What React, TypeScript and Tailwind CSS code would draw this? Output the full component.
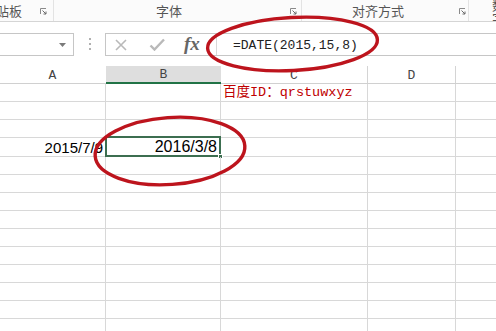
import React from "react";

const cols = [
  { key: "A", w: "w-[106px]" },
  { key: "B", w: "w-[115px]" },
  { key: "C", w: "w-[147px]" },
  { key: "D", w: "w-[88px]" },
  { key: "E", w: "flex-1" },
];

function Launcher() {
  return (
    <svg width="7" height="7" viewBox="0 0 7 7" className="shrink-0">
      <path d="M0.5 6V0.5H6" fill="none" stroke="#8a8a8a" strokeWidth="1" />
      <path d="M2.5 2.5L6 6M6 3.5V6H3.5" fill="none" stroke="#6a6a6a" strokeWidth="1" />
    </svg>
  );
}

function Ribbon() {
  return (
    <div className="flex h-[22px] border-b border-[#d5d5d5] bg-[#fbfbfb] text-[13px] text-[#555] font-['Noto_Sans_CJK_SC',sans-serif] overflow-hidden">
      <div className="flex w-[54px] shrink-0 items-center border-r border-[#e3e3e3]">
        <span className="-ml-[17px] leading-none">剪贴板</span>
        <span className="ml-auto mr-[6px] mt-[2px]">
          <Launcher />
        </span>
      </div>
      <div className="flex w-[248px] shrink-0 items-center border-r border-[#e3e3e3]">
        <span className="ml-[102px] leading-none">字体</span>
        <span className="ml-auto mr-[4px] mt-[2px]">
          <Launcher />
        </span>
      </div>
      <div className="flex w-[167px] shrink-0 items-center border-r border-[#e3e3e3]">
        <span className="ml-[50px] leading-none">对齐方式</span>
        <span className="ml-auto mr-[2px] mt-[2px]">
          <Launcher />
        </span>
      </div>
      <div className="flex flex-1 items-center">
        <span className="ml-[23px] leading-none">数字</span>
      </div>
    </div>
  );
}

function FormulaBar() {
  return (
    <div className="flex h-[44px] items-start pt-[11px] bg-white">
      <div className="flex h-[23px] w-[74px] shrink-0 items-center border border-l-0 border-[#c6c6c6]">
        <svg width="7" height="4" viewBox="0 0 7 4" className="ml-auto mr-[7px]">
          <path d="M0 0H7L3.5 4Z" fill="#7a7a7a" />
        </svg>
      </div>
      <div className="flex w-[31px] shrink-0 flex-col items-center gap-[3px] pt-[5px]">
        <span className="h-[2px] w-[2px] bg-[#b0b0b0]" />
        <span className="h-[2px] w-[2px] bg-[#b0b0b0]" />
        <span className="h-[2px] w-[2px] bg-[#b0b0b0]" />
      </div>
      <div className="flex h-[23px] flex-1 items-center border border-r-0 border-[#c6c6c6]">
        <div className="flex w-[110px] items-center shrink-0">
          <svg width="12" height="12" viewBox="0 0 12 12" className="ml-[9px]">
            <path d="M1 1L11 11M11 1L1 11" stroke="#b9b9b9" strokeWidth="1.6" />
          </svg>
          <svg width="16" height="13" viewBox="0 0 16 13" className="ml-[22px]">
            <path d="M1.5 7.5L5.5 11.5L15 1.5" fill="none" stroke="#b9b9b9" strokeWidth="2.4" />
          </svg>
          <span className="ml-[19px] font-['Liberation_Serif',serif] italic font-bold text-[19px] leading-none text-[#666] -mt-[2px]">
            fx
          </span>
        </div>
        <div className="h-full border-l border-[#d8d8d8]" />
        <span className="ml-[16px] mt-[1px] font-['Liberation_Mono',monospace] text-[13px] text-[#222] leading-none">
          =DATE(2015,15,8)
        </span>
      </div>
    </div>
  );
}

function HeaderRow() {
  return (
    <div className="flex h-[18px] border-b border-[#d0d0d0] bg-white font-['Liberation_Mono',monospace] text-[13px] text-[#444]">
      {cols.map((c) => (
        <div
          key={c.key}
          className={`${c.w} shrink-0 flex items-center justify-center pt-[2px] ${
            c.key === "B"
              ? "bg-[#dedede] border-b-2 border-[#217346] -mb-px"
              : ""
          } ${c.key === "C" || c.key === "D" ? "border-r border-[#d4d4d4]" : ""} ${
            c.key === "A" ? "border-r border-transparent" : ""
          }`}
        >
          {c.key === "E" ? "" : c.key}
        </div>
      ))}
    </div>
  );
}

function Row({ index }: { index: number }) {
  const tall = index === 4;
  return (
    <div className={`flex ${tall ? "h-[19px]" : "h-[18px]"} border-b border-[#d8d8d8]`}>
      {cols.map((c) => {
        const selected = index === 4 && c.key === "B";
        return (
          <div
            key={c.key}
            className={`${c.w} shrink-0 relative flex items-center ${
              c.key !== "E" ? "border-r border-[#d8d8d8]" : ""
            }`}
          >
            {index === 1 && c.key === "C" && (
              <span className="pl-[2px] whitespace-nowrap text-[13.5px] leading-none text-[#c00000] font-['Liberation_Mono','Noto_Sans_CJK_SC',monospace]">
                百度ID：qrstuwxyz
              </span>
            )}
            {index === 4 && c.key === "A" && (
              <span className="ml-auto pr-[2px] font-['Liberation_Sans',sans-serif] text-[15px] leading-none text-black">
                2015/7/9
              </span>
            )}
            {selected && (
              <>
                <span className="ml-auto pr-[3px] font-['Liberation_Sans',sans-serif] text-[16px] leading-none text-black">
                  2016/3/8
                </span>
                <div className="absolute -left-px -top-[2px] -right-[1px] -bottom-[1px] border-2 border-[#3c6e50]" />
                <div className="absolute -right-[3px] -bottom-[3px] h-[5px] w-[5px] bg-[#3c6e50] border border-white" />
              </>
            )}
          </div>
        );
      })}
    </div>
  );
}

export default function App() {
  return (
    <div className="relative h-[331px] w-[496px] overflow-hidden bg-white">
      <Ribbon />
      <FormulaBar />
      <HeaderRow />
      {Array.from({ length: 14 }).map((_, i) => (
        <Row key={i} index={i + 1} />
      ))}
      <svg
        className="pointer-events-none absolute left-0 top-0"
        width="496"
        height="331"
        viewBox="0 0 496 331"
      >
        <ellipse
          cx="292.5"
          cy="44"
          rx="85"
          ry="26.5"
          transform="rotate(-3 292.5 44)"
          fill="none"
          stroke="#bd141d"
          strokeWidth="3.4"
        />
        <ellipse
          cx="170"
          cy="151"
          rx="75"
          ry="33.5"
          transform="rotate(-4 170 151)"
          fill="none"
          stroke="#bd141d"
          strokeWidth="3.4"
        />
      </svg>
    </div>
  );
}
